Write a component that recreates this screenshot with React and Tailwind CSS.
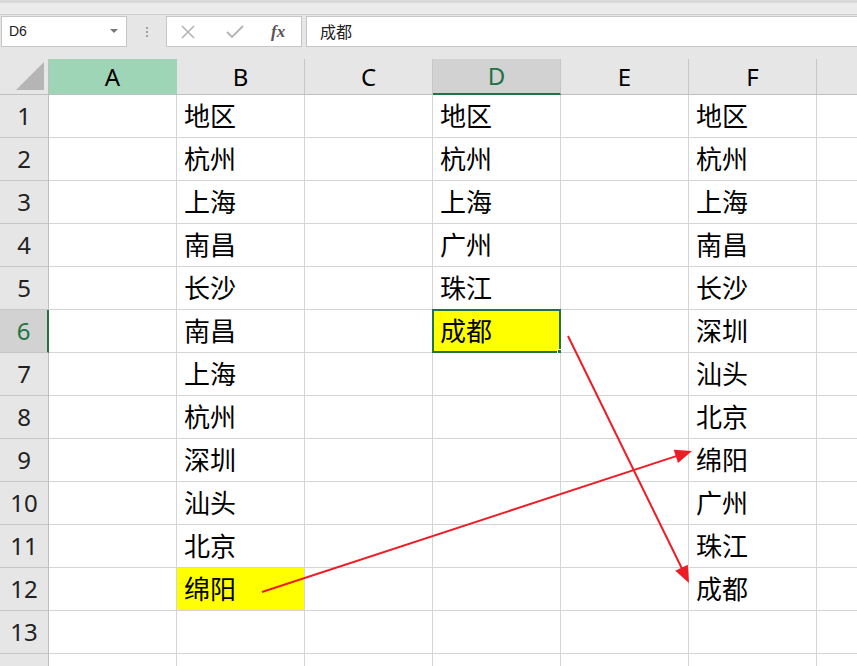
import React from 'react'

const cols = ['A', 'B', 'C', 'D', 'E', 'F']

const colB = ['地区', '杭州', '上海', '南昌', '长沙', '南昌', '上海', '杭州', '深圳', '汕头', '北京', '绵阳', '']
const colD = ['地区', '杭州', '上海', '广州', '珠江', '成都', '', '', '', '', '', '', '']
const colF = ['地区', '杭州', '上海', '南昌', '长沙', '深圳', '汕头', '北京', '绵阳', '广州', '珠江', '成都', '']

const font = { fontFamily: '"Noto Sans", "Noto Sans CJK SC", sans-serif' }

function Arrow({ x1, y1, x2, y2, len = 17, half = 7 }) {
  const dx = x2 - x1
  const dy = y2 - y1
  const d = Math.hypot(dx, dy)
  const ux = dx / d
  const uy = dy / d
  const bx = x2 - ux * len
  const by = y2 - uy * len
  const px = -uy * half
  const py = ux * half
  return (
    <g>
      <line x1={x1} y1={y1} x2={bx + ux * 2} y2={by + uy * 2} stroke="#ee1c25" strokeWidth="2" />
      <polygon points={`${x2},${y2} ${bx + px},${by + py} ${bx - px},${by - py}`} fill="#ee1c25" />
    </g>
  )
}

function Cell({ text, yellow, selected, last }) {
  return (
    <div
      className={`relative h-[43px] border-b border-[#d4d4d4] flex items-center pl-[7px] text-[26px] text-black ${last ? '' : 'border-r'} ${yellow ? 'bg-[#ffff00]' : 'bg-white'}`}
    >
      {text}
      {selected && (
        <div className="absolute left-[-1px] top-[-1px] right-[-1px] bottom-[-1px] border-2 border-[#217346]">
          <div className="absolute right-[-5px] bottom-[-5px] w-[7px] h-[7px] bg-[#217346] border border-white" />
        </div>
      )}
    </div>
  )
}

export default function App() {
  const rows = Array.from({ length: 14 }, (_, i) => i + 1)
  return (
    <div className="relative w-[857px] h-[666px] overflow-hidden bg-white" style={font}>
      {/* formula bar */}
      <div className="h-[59px] bg-[#e6e6e6] border-t-[3px] border-[#d9d9d9]">
        <div className="h-[12px] border-b border-[#cfcfcf] bg-[#ececec]" />
        <div className="flex items-center h-[31px] mt-[1px]">
          <div className="ml-[1px] w-[126px] h-[31px] bg-white border border-[#c6c6c6] flex items-center justify-between pl-[7px] pr-[8px]">
            <span className="text-[14px] text-[#222]" style={{ fontFamily: '"Liberation Sans", sans-serif' }}>D6</span>
            <svg width="8" height="5" viewBox="0 0 8 5"><path d="M0 0 L8 0 L4 4 Z" fill="#777" /></svg>
          </div>
          <div className="w-[39px] flex justify-center">
            <div className="flex flex-col gap-[2px]">
              <div className="w-[2px] h-[2px] bg-[#a0a0a0]" />
              <div className="w-[2px] h-[2px] bg-[#a0a0a0]" />
              <div className="w-[2px] h-[2px] bg-[#a0a0a0]" />
            </div>
          </div>
          <div className="w-[136px] h-[31px] bg-white border border-[#c6c6c6] flex items-center pl-[13px]">
            <svg width="16" height="16" viewBox="0 0 16 16"><path d="M2 2 L14 14 M14 2 L2 14" stroke="#b4b4b4" strokeWidth="1.6" /></svg>
            <svg className="ml-[30px]" width="18" height="16" viewBox="0 0 18 16"><path d="M1 8 L6 13 L17 2" stroke="#b4b4b4" strokeWidth="1.8" fill="none" /></svg>
            <span className="ml-[27px] text-[17px] italic font-bold text-[#555]" style={{ fontFamily: '"Liberation Serif", serif' }}>fx</span>
          </div>
          <div className="ml-[4px] flex-1 h-[31px] bg-white border border-[#c6c6c6] border-r-0 flex items-center pl-[13px] text-[16px] text-[#222]">
            成都
          </div>
        </div>
      </div>

      {/* grid */}
      <div className="grid grid-cols-[49px_repeat(6,128px)_1fr]">
        {/* header row */}
        <div className="relative h-[36px] bg-[#e6e6e6] border-r border-b border-[#bfbfbf]">
          <svg className="absolute right-[4px] bottom-[4px]" width="28" height="28" viewBox="0 0 28 28"><path d="M28 0 L28 28 L0 28 Z" fill="#b5b5b5" /></svg>
        </div>
        {cols.map((c) => {
          const isA = c === 'A'
          const isD = c === 'D'
          return (
            <div
              key={c}
              className={`h-[36px] flex items-center justify-center text-[24px] border-r ${isA ? 'bg-[#9fd5b7] border-[#9fd5b7] border-b border-b-[#bfbfbf] text-black' : isD ? 'bg-[#d2d2d2] border-[#c6c6c6] border-b-2 border-b-[#217346] text-[#217346]' : 'bg-[#e6e6e6] border-[#c6c6c6] border-b border-b-[#bfbfbf] text-black'}`}
            >
              {c}
            </div>
          )
        })}
        <div className="h-[36px] bg-[#e6e6e6] border-b border-[#bfbfbf]" />

        {rows.map((r) => {
          const i = r - 1
          const sel = r === 6
          return (
            <React.Fragment key={r}>
              <div
                className={`h-[43px] flex items-center justify-center text-[24px] border-b border-[#c6c6c6] ${sel ? 'bg-[#d2d2d2] text-[#217346] border-r-2 border-r-[#217346]' : 'bg-[#e6e6e6] text-[#222] border-r border-r-[#bfbfbf]'}`}
              >
                {r < 14 ? r : ''}
              </div>
              <Cell text="" />
              <Cell text={colB[i] || ''} yellow={r === 12} />
              <Cell text="" />
              <Cell text={colD[i] || ''} yellow={r === 6} selected={r === 6} />
              <Cell text="" />
              <Cell text={colF[i] || ''} />
              <Cell text="" last />
            </React.Fragment>
          )
        })}
      </div>

      {/* arrows drawn over the sheet */}
      <svg className="absolute left-0 top-0 pointer-events-none" width="857" height="666">
        <Arrow x1={262} y1={592} x2={692} y2={451} />
        <Arrow x1={568} y1={336} x2={689} y2={583} />
      </svg>
    </div>
  )
}
